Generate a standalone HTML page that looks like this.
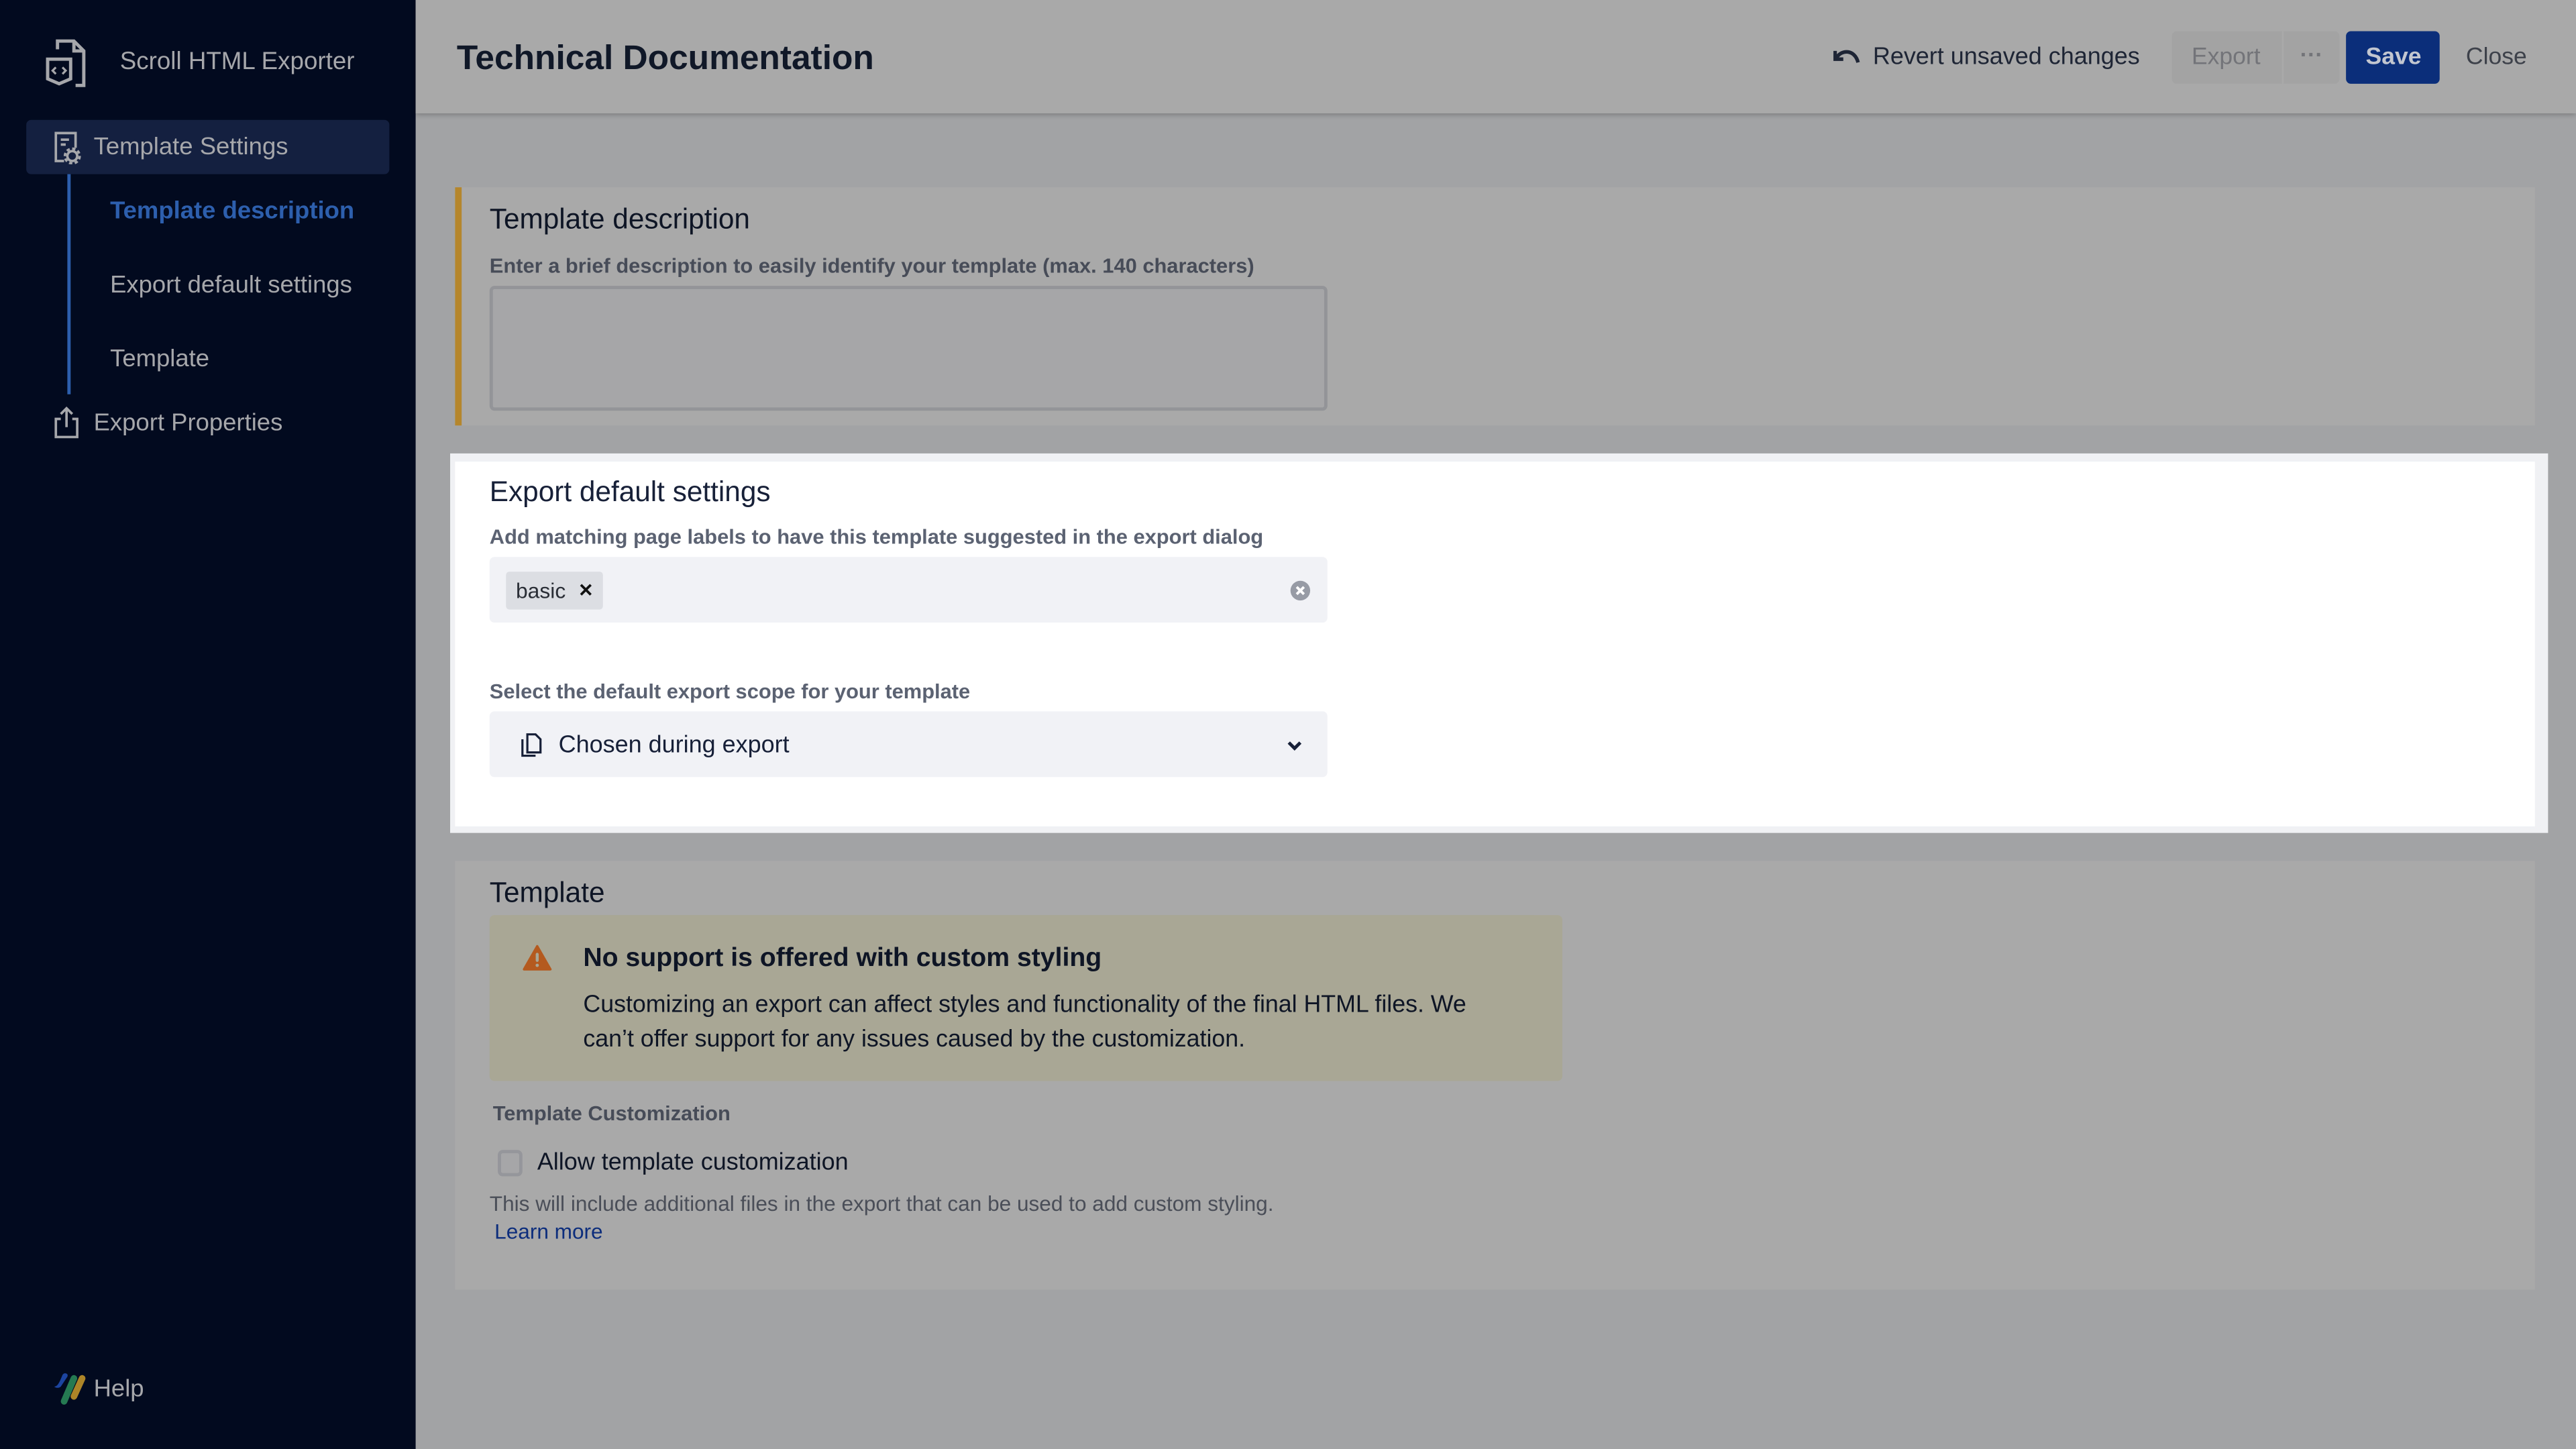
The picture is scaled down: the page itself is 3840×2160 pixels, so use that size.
<!DOCTYPE html>
<html><head><meta charset="utf-8"><style>
html,body{margin:0;padding:0;width:3840px;height:2160px;overflow:hidden;background:#a2a3a5}
#w{position:absolute;left:0;top:0;width:1568px;height:882px;transform:scale(2.44898);transform-origin:0 0;font-family:"Liberation Sans",sans-serif}
.a{position:absolute}
.sb{left:0;top:0;width:253px;height:882px;background:#020a1f}
.st{color:#a6a7ab;font-size:14.9px;white-space:nowrap}
.hd{left:253px;top:0;width:1315px;height:69px;background:#a9a9a9;box-shadow:0 1px 3px rgba(0,0,0,.25)}
.pn{background:#a9a9a9}
h2{margin:0;font-size:17.3px;font-weight:normal;color:#0e1525;position:absolute;white-space:nowrap}
.lb{font-size:12.6px;font-weight:bold;color:#474c58;position:absolute;white-space:nowrap}
</style></head><body><div id="w">
<div class="a sb"></div>
<svg class="a" style="left:27px;top:22px" width="28" height="32" viewBox="0 0 28 32" fill="none" stroke="#a6a7ab" stroke-width="2"><path d="M8 8V3h10l6 6v21h-5"/><path d="M18 3v6h6"/><path d="M2 14h14v12l-7 3-7-3z"/><path d="M7 19l-2 2 2 2M11 19l2 2-2 2" stroke-width="1.3"/></svg>
<div class="a st" style="left:73px;top:29px;font-size:15px">Scroll HTML Exporter</div>
<div class="a" style="left:16px;top:73px;width:221px;height:33px;background:#142040;border-radius:3px"></div>
<svg class="a" style="left:32px;top:80px" width="18" height="20" viewBox="0 0 18 20" fill="none" stroke="#a6a7ab" stroke-width="1.5"><path d="M7 18H2V1h12v9"/><path d="M5 5h5M5 8h3"/><circle cx="12" cy="15" r="3"/><circle cx="12" cy="15" r="4.5" stroke-dasharray="2 1.5"/></svg>
<div class="a st" style="left:57px;top:82px">Template Settings</div>
<div class="a" style="left:41px;top:106px;width:2px;height:134px;background:#2d5fad"></div>
<div class="a st" style="left:67px;top:121px;color:#2d5fad;font-weight:bold">Template description</div>
<div class="a st" style="left:67px;top:166px">Export default settings</div>
<div class="a st" style="left:67px;top:211px">Template</div>
<svg class="a" style="left:32px;top:247px" width="17" height="20" viewBox="0 0 17 20" fill="none" stroke="#a6a7ab" stroke-width="1.5"><path d="M5 8H2v11h13V8h-3"/><path d="M8.5 13V2M5 5l3.5-3.5L12 5"/></svg>
<div class="a st" style="left:57px;top:250px">Export Properties</div>
<svg class="a" style="left:30px;top:834px" width="24" height="22" viewBox="0 0 24 22"><path d="M8 3c1-2 4-1 3 1l-4 6c-1 1-3 1-4 0 2 0 3-2 5-7z" fill="#1c44a0"/><path d="M9 19L15 5" stroke="#257a52" stroke-width="4" stroke-linecap="round"/><path d="M15 16L20 5" stroke="#ad8528" stroke-width="4" stroke-linecap="round"/></svg>
<div class="a st" style="left:57px;top:838px">Help</div>

<div class="a hd"></div>
<div class="a" style="left:278px;top:24px;font-size:21px;font-weight:bold;color:#101828">Technical Documentation</div>
<svg class="a" style="left:1116px;top:28px" width="17" height="14" viewBox="0 0 17 14" fill="none" stroke="#1e2535" stroke-width="2.2"><path d="M1 3v5h5"/><path d="M2 7c3-5 11-5 13 3"/></svg>
<div class="a" style="left:1140px;top:27px;font-size:14.7px;color:#1e2535">Revert unsaved changes</div>
<div class="a" style="left:1322px;top:19px;width:67px;height:32px;background:#a3a3a3;border-radius:3px 0 0 3px"></div>
<div class="a" style="left:1390px;top:19px;width:34px;height:32px;background:#a3a3a3;border-radius:0 3px 3px 0"></div>
<div class="a" style="left:1334px;top:27px;font-size:14.5px;color:#737479">Export</div>
<div class="a" style="left:1400px;top:25px;font-size:14px;color:#737479;font-weight:bold">···</div>
<div class="a" style="left:1428px;top:19px;width:57px;height:32px;background:#0b2e7a;border-radius:3px"></div>
<div class="a" style="left:1440px;top:27px;font-size:14.5px;color:#c2c6d0;font-weight:bold">Save</div>
<div class="a" style="left:1501px;top:27px;font-size:14.5px;color:#3d414a">Close</div>

<div class="a pn" style="left:277px;top:114px;width:1266px;height:145px;border-left:4px solid #b5862c;box-sizing:border-box"></div>
<h2 style="left:298px;top:123px">Template description</h2>
<div class="lb" style="left:298px;top:155px">Enter a brief description to easily identify your template (max. 140 characters)</div>
<div class="a" style="left:298px;top:174px;width:510px;height:76px;box-sizing:border-box;border:2px solid #939498;border-radius:3px;background:#a6a6a8"></div>

<div class="a" style="left:274px;top:276px;width:1277px;height:231px;background:#f0f1f4"></div>
<div class="a" style="left:277px;top:281px;width:1266px;height:222px;background:#fff"></div>
<h2 style="left:298px;top:289px;color:#172038">Export default settings</h2>
<div class="lb" style="left:298px;top:320px;color:#5b6272">Add matching page labels to have this template suggested in the export dialog</div>
<div class="a" style="left:298px;top:339px;width:510px;height:40px;background:#f1f2f6;border-radius:3px"></div>
<div class="a" style="left:308px;top:348px;width:59px;height:23px;background:#dcdee3;border-radius:2px"></div>
<div class="a" style="left:314px;top:352px;font-size:13px;color:#2a2e36">basic</div>
<div class="a" style="left:352px;top:353px;font-size:11px;color:#111;font-weight:bold">✕</div>
<svg class="a" style="left:785px;top:353px" width="13" height="13" viewBox="0 0 13 13"><circle cx="6.5" cy="6.5" r="6" fill="#979ba5"/><path d="M4.3 4.3l4.4 4.4M8.7 4.3l-4.4 4.4" stroke="#fff" stroke-width="1.6"/></svg>
<div class="lb" style="left:298px;top:414px;color:#5b6272">Select the default export scope for your template</div>
<div class="a" style="left:298px;top:433px;width:510px;height:40px;background:#f1f2f6;border-radius:3px"></div>
<svg class="a" style="left:317px;top:446px" width="13" height="15" viewBox="0 0 13 15" fill="none" stroke="#172038" stroke-width="1.3"><path d="M4 1h5l3 3v8H4z"/><path d="M1 4v10h8"/></svg>
<div class="a" style="left:340px;top:446px;font-size:14.7px;color:#172038">Chosen during export</div>
<svg class="a" style="left:783px;top:450px" width="10" height="8" viewBox="0 0 10 8" fill="none" stroke="#172038" stroke-width="2"><path d="M1.5 2l3.5 3.5L8.5 2"/></svg>

<div class="a pn" style="left:277px;top:524px;width:1266px;height:261px"></div>
<h2 style="left:298px;top:533px">Template</h2>
<div class="a" style="left:298px;top:557px;width:653px;height:101px;background:#a9a795;border-radius:3px"></div>
<svg class="a" style="left:318px;top:575px" width="18" height="16" viewBox="0 0 18 16"><path d="M9 1L17 15H1z" fill="#b45a1f" stroke="#b45a1f" stroke-linejoin="round" stroke-width="1.5"/><rect x="8.1" y="5" width="1.8" height="5.5" rx=".9" fill="#a9a795"/><circle cx="9" cy="12.6" r="1" fill="#a9a795"/></svg>
<div class="a" style="left:355px;top:575px;font-size:16px;font-weight:bold;color:#0e1525">No support is offered with custom styling</div>
<div class="a" style="left:355px;top:602px;font-size:14.6px;line-height:21px;color:#0e1525;width:555px">Customizing an export can affect styles and functionality of the final HTML files. We can’t offer support for any issues caused by the customization.</div>
<div class="lb" style="left:300px;top:671px">Template Customization</div>
<div class="a" style="left:303px;top:700px;width:11px;height:12px;border:2px solid #95969b;border-radius:3px;background:#a6a6a8"></div>
<div class="a" style="left:327px;top:700px;font-size:14.7px;color:#0e1525">Allow template customization</div>
<div class="a" style="left:298px;top:725px;font-size:12.9px;color:#4a4e58">This will include additional files in the export that can be used to add custom styling.</div>
<div class="a" style="left:301px;top:742px;font-size:12.9px;color:#0c2d7c">Learn more</div>
</div></body></html>
